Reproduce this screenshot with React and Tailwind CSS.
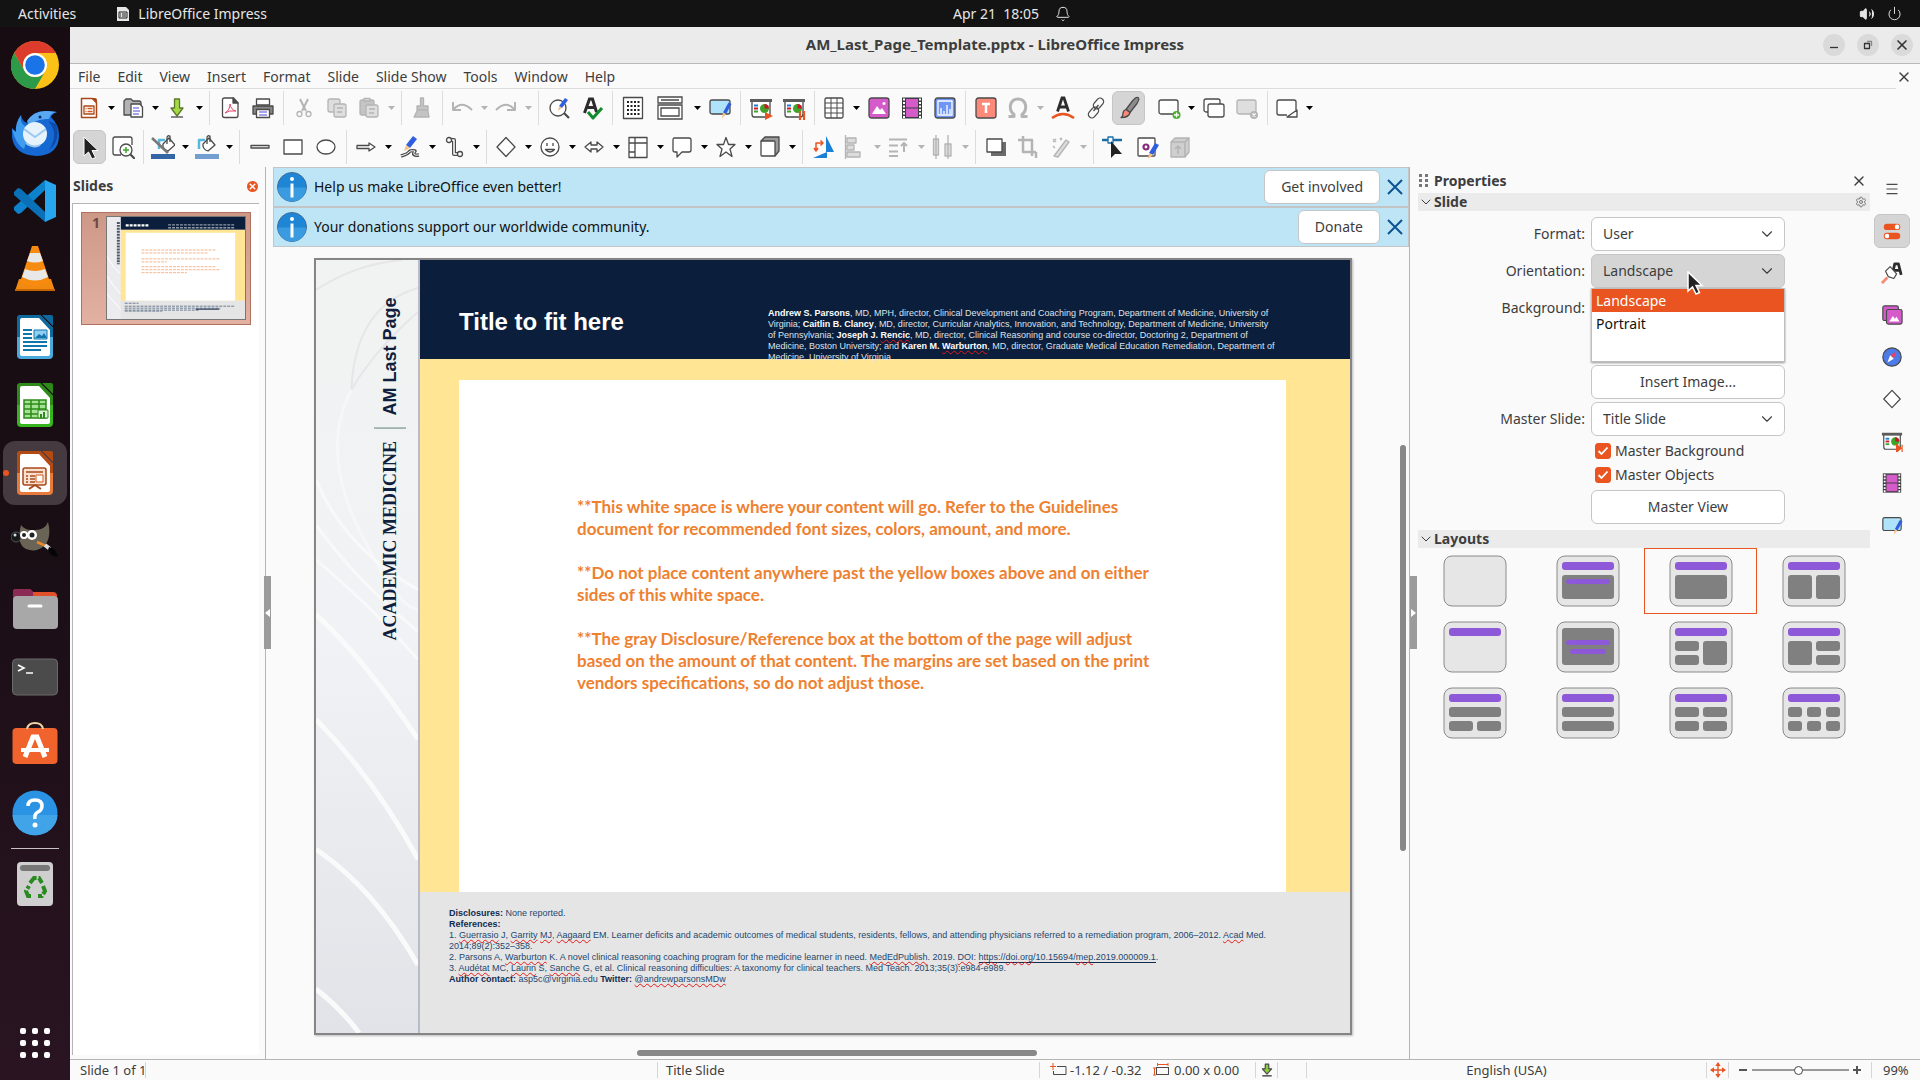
import React, { useState } from 'react';
import { Bell, Volume2, Power, X, ChevronDown, Settings } from 'lucide-react';

const INK = '#4a4a4a';
const OFF = '#b4b4b4';

function Icon({ children, size = 24, box = 24, stroke = INK, className = '' }) {
  return (
    <svg
      width={size}
      height={size}
      viewBox={`0 0 ${box} ${box}`}
      fill="none"
      stroke={stroke}
      strokeWidth="1.3"
      strokeLinejoin="round"
      className={`shrink-0 ${className}`}
      aria-hidden="true"
    >
      {children}
    </svg>
  );
}

/* Shared icon pieces */
const plate = (
  <>
    <path d="M3 5h18v13q0 3-3 3H5q-2 0-2-3z" fill="#fff" />
    <path d="M1 3h22v3H1z" fill="#5c5c5c" stroke="none" />
    <path d="M5 9.500h4" stroke="#1a7fd6" strokeWidth="2" />
    <path d="M5 12.500h4" stroke="#c9162c" strokeWidth="2" />
    <path d="M5 15.500h4" stroke="#3fa52a" strokeWidth="2" />
    <circle cx="15.500" cy="12.500" r="4.500" fill="#3fa52a" stroke="none" />
    <path d="M15.500 12.500V8a4.500 4.500 0 0 1 4.500 4.500z" fill="#c9162c" stroke="none" />
  </>
);

const penBoard = (
  <>
    <rect x="2" y="4" width="20" height="14" rx="2" fill="#aee3f9" />
    <path d="M20.500 6.500l3 1.500-5.500 10-3-1.500z" fill="#2f5fe0" stroke="none" />
    <path d="M15 16.500l3 1.500-4 4.500z" fill="#f9c08a" stroke="none" />
  </>
);

const film = (
  <>
    <rect x="2" y="1.500" width="20" height="21" fill="#3c3c3c" stroke="none" />
    <rect x="6" y="3" width="12" height="8.500" fill="#d55bcb" stroke="none" />
    <rect x="6" y="12.500" width="12" height="8.500" fill="#d55bcb" stroke="none" />
    <path d="M4 2.500v20M20 2.500v20" stroke="#fff" strokeWidth="2" strokeDasharray="2 1.500" />
  </>
);

const cursorPath = 'M1 1v19l4.500-4 3.500 7 3.500-1.500-3.500-7h6z';

const bucket = (
  <>
    <path d="M4 14V5h6" stroke="#58b7dc" strokeWidth="2.500" />
    <path d="M8 9l6-6 6 7-7 6q-6-2-5-7z" fill="#fff" />
    <path d="M12 9V3q0-3 3-2v6" />
  </>
);

const icons = {
  newDoc: (
    <>
      <path d="M4.500 2.500h11l4 4v15h-15z" fill="#fff" stroke="#a8481a" strokeWidth="1.500" />
      <path d="M14 2h4q2 0 2 2v4z" fill="#a8481a" stroke="none" />
      <rect x="7" y="10" width="10" height="8" stroke="#a8481a" />
      <path d="M8.500 12.500h1m1 0h5m-7 3h1m1 0h5" stroke="#d05a1f" />
    </>
  ),
  open: (
    <>
      <path d="M3 19V5l2-2h5l2 2h6q2 0 2 2v12z" fill="#b3b3b3" />
      <path d="M10 8h9l2.500 3v10H10z" fill="#fff" />
      <path d="M12 12h6m-6 3h7m-7 3h6" stroke="#8a84e6" />
    </>
  ),
  save: (
    <>
      <path d="M9.500 3h5v9H18l-6 8-6-8h3.500z" fill="#a5d845" stroke="#5c7a2c" />
      <path d="M6 21h12" />
    </>
  ),
  pdf: (
    <>
      <path d="M4.500 4q0-2 2-2h9l4.500 5v12.500q0 2-2 2h-11.500q-2 0-2-2z" fill="#fff" />
      <path d="M15 2v5h5z" fill={INK} />
      <path d="M12 8q0 6-5 9 4-3 11-2-5-1-6-7z" stroke="#e5446a" strokeWidth="1" />
    </>
  ),
  print: (
    <>
      <rect x="5.500" y="3" width="13" height="6" fill="#fff" />
      <path d="M2 10h20v8H2z" fill="#848484" />
      <rect x="5.500" y="13.500" width="13" height="8" fill="#fff" />
      <path d="M8 16h8m-8 3h8" stroke="#8a84e6" />
    </>
  ),
  cut: (
    <>
      <path d="M8 3l6 12M16 3l-6 12" strokeWidth="2" />
      <circle cx="7.500" cy="18" r="2.500" />
      <circle cx="16.500" cy="18" r="2.500" />
    </>
  ),
  copy: (
    <>
      <rect x="3" y="3" width="12" height="13" rx="2" fill="#dedede" />
      <rect x="9" y="8" width="12" height="13" rx="2" fill="#dedede" />
      <path d="M12 12h6m-6 4h5" />
    </>
  ),
  paste: (
    <>
      <rect x="3" y="4" width="14" height="15" rx="2" fill="#c4c4c4" />
      <path d="M7 5V2.500h6V5z" fill="#dedede" />
      <rect x="9" y="9" width="12" height="12" rx="2" fill="#dedede" />
      <path d="M12 13h6m-6 4h5" />
    </>
  ),
  clone: <path d="M10.500 2h3v8H18v5l1 6H4l3-6v-5h3.500zM7 14h11" fill="#c4c4c4" />,
  undo: <path d="M3 6v8h8M4 13q8-9 18 1" strokeWidth="2" />,
  redo: <path d="M21 6v8h-8M20 13q-8-9-18 1" strokeWidth="2" />,
  find: (
    <>
      <circle cx="11" cy="12" r="8" fill="#fff" />
      <path d="M17 17l5 5" strokeWidth="2.200" />
      <path d="M18 2l3 2-6 8-3-2z" fill="#2f5fe0" stroke="none" />
      <path d="M12 10l3 2-4 3z" fill="#f9c08a" stroke="none" />
    </>
  ),
  spell: (
    <>
      <path d="M4.500 17L9.500 3h3l4 13M6.500 11.500h8" stroke="#2c2c2c" strokeWidth="3" strokeLinejoin="miter" />
      <path d="M8 16l5 6 9-10" stroke="#138a2b" strokeWidth="3" />
    </>
  ),
  grid: (
    <>
      <rect x="2.500" y="1.500" width="19" height="21" fill="#fff" />
      <path d="M6 6h13M6 10h13M6 14h13M6 18h13" stroke="#222" strokeWidth="2" strokeDasharray="2 1.500" />
    </>
  ),
  tableIns: (
    <>
      <rect x="3" y="2" width="18" height="20" rx="1.500" fill="#fff" />
      <path d="M3 7h18M3 12h18M3 17h18M9 2v20M15 2v20" strokeWidth="1" />
    </>
  ),
  startFirst: (
    <>
      {plate}
      <path d="M16 16v8l8-4z" fill="#e95420" stroke="none" />
    </>
  ),
  startCurrent: (
    <>
      {plate}
      <path d="M18 15v9M22 15v9" stroke="#e95420" strokeWidth="2.200" />
    </>
  ),
  image: (
    <>
      <rect x="2" y="2" width="20" height="20" rx="2.500" fill="#d55bcb" />
      <path d="M5 18l5-8 3 4 2-2 4 6z" fill="#fff" stroke="none" />
      <circle cx="17" cy="7.500" r="1.500" fill="#fff" stroke="none" />
    </>
  ),
  film,
  chart: (
    <>
      <rect x="2" y="2" width="20" height="20" rx="2.500" fill="#6f96f5" />
      <path d="M5 5v14h14V5zM8 18v-6m3 6v-3m3 3V9m3 9v-5" stroke="#fff" />
    </>
  ),
  textBox: (
    <>
      <rect x="2" y="2" width="20" height="20" rx="2.500" fill="#fb8a7a" />
      <path d="M8 8h8M12 8v9" stroke="#fff" strokeWidth="2.500" />
    </>
  ),
  omega: <path d="M2.500 20.500H8v-2Q3.500 15 4.500 9 6 3 12 3t7.500 6q1 6-3.500 9.500v2h5.500" strokeWidth="3" />,
  fontwork: (
    <>
      <path d="M6.500 15.500L11 2h2l4.500 13.500M8 11h8" stroke="#2c2c2c" strokeWidth="2.800" strokeLinejoin="miter" />
      <path d="M1 22q11-8 22 0" stroke="#e95420" strokeWidth="2.500" />
    </>
  ),
  link: (
    <>
      <rect x="11" y="1.500" width="7" height="12" rx="3.500" transform="rotate(40 14.500 7.500)" />
      <rect x="6" y="10.500" width="7" height="12" rx="3.500" transform="rotate(40 9.500 16.500)" />
      <path d="M9.500 15l5-6" />
    </>
  ),
  brush: (
    <>
      <path d="M21 1.500q2 1-1 6l-7 9-4-3 6-8q4-5 6-4z" fill="#8c8c8c" />
      <path d="M9 13.500l4 3q-1 5-9 5 2-1 2-4t3-4z" fill="#f98a78" />
    </>
  ),
  newSlide: (
    <>
      <rect x="2" y="4" width="19" height="14" rx="2" fill="#fff" />
      <circle cx="19.500" cy="19" r="4" fill="#4caf2c" stroke="none" />
      <path d="M17 19h5m-2.500-2.500v5" stroke="#fff" />
    </>
  ),
  dupSlide: (
    <>
      <rect x="2" y="3" width="16" height="13" rx="2" fill="#fff" />
      <rect x="6" y="8" width="16" height="13" rx="2" fill="#fff" />
    </>
  ),
  delSlide: (
    <>
      <rect x="2" y="4" width="19" height="14" rx="2" fill="#dedede" />
      <circle cx="19" cy="19" r="4" fill="#b4b4b4" stroke="none" />
      <path d="M17.500 17.500l3 3m0-3l-3 3" stroke="#fff" />
    </>
  ),
  slideLayout: (
    <>
      <path d="M21 14V6q0-2-2-2H4Q2 4 2 6v11q0 2 2 2h8" fill="#fff" />
      <path d="M12 21l10-7v7z" fill="#fff" />
    </>
  ),
  penBoard,
  cursor: <path d={cursorPath} transform="translate(5 1)" fill="#222" stroke="#fff" strokeWidth="1" />,
  zoomPan: (
    <>
      <path d="M10 20H4q-2 0-2-2V4q0-2 2-2h15q2 0 2 2v6" fill="#fff" />
      <circle cx="15" cy="15" r="6" fill="#fff" />
      <path d="M19.500 19.500L24 24" strokeWidth="2.200" />
      <path d="M12 15h6m-3-3v6" stroke="#3fa52a" strokeWidth="1.500" />
    </>
  ),
  lineColor: (
    <>
      <g transform="translate(4 0)">{bucket}</g>
      <path d="M1 3l16 15" strokeWidth="2.500" stroke="#777" />
      <path d="M0 19h24v5H0z" fill="#3465a4" stroke="none" />
    </>
  ),
  fillColor: (
    <>
      {bucket}
      <path d="M0 19h24v5H0z" fill="#729fcf" stroke="none" />
    </>
  ),
  line: <rect x="3" y="10.500" width="18" height="2.500" fill="#fff" />,
  rect: <rect x="3" y="5" width="18" height="14" fill="#fff" />,
  ellipse: <ellipse cx="12" cy="12" rx="9" ry="7" fill="#fff" />,
  arrowLine: <path d="M3 10.500h12V8l6 4-6 4v-2.500H3z" fill="#fff" />,
  curve: (
    <>
      <path d="M15 1l4 3-7 9-4-3z" fill="#2f5fe0" stroke="none" />
      <path d="M8 10l4 3-6 3z" fill="#f9c08a" stroke="none" />
      <path d="M3 21q7-2 8-4t6-1q-4 5 4 4" strokeWidth="3.500" />
      <path d="M3 21q7-2 8-4t6-1q-4 5 4 4" stroke="#fff" strokeWidth="1" />
    </>
  ),
  connector: (
    <>
      <path d="M7 5h5v14h4" strokeWidth="4" />
      <path d="M7 5h5v14h4" stroke="#fff" strokeWidth="1.500" />
      <circle cx="7" cy="5" r="2.500" fill="#fff" />
      <circle cx="18" cy="19" r="2.500" fill="#fff" />
    </>
  ),
  diamond: <path d="M12 2.500l9 9.500-9 9.500L3 12z" fill="#fff" />,
  smiley: (
    <>
      <circle cx="12" cy="12" r="9" fill="#fff" />
      <path d="M9 8v3m6-3v3M7.500 14.500q4.500 5 9 0z" />
    </>
  ),
  doubleArrow: <path d="M3 12l6-5v3h6V7l6 5-6 5v-3H9v3z" fill="#fff" />,
  flow: (
    <>
      <rect x="3" y="2.500" width="18" height="20" fill="#fff" />
      <path d="M9 2.500v20M3 8h18M3 17h6" />
    </>
  ),
  callout: <path d="M4 3h15q2 0 2 2v10q0 2-2 2h-7l-5 5v-5H5q-2 0-2-2V5q0-2 1-2z" fill="#fff" />,
  star: <path d="M12 2.500l2.500 7H21l-5 4.500 2 7.500-6-4.500-6 4.500L8 14 3 9.500h6.500z" fill="#fff" />,
  cube: (
    <>
      <path d="M3 6l4-4h14v14l-4 5z" fill="#9b9b9b" />
      <rect x="3" y="6" width="14" height="15" rx="1" fill="#fff" />
    </>
  ),
  rotate: (
    <>
      <path d="M15 1v16h8z" fill="#1a7fd6" stroke="none" />
      <path d="M2 23h14v-6z" fill="#1a7fd6" stroke="none" />
      <path d="M5 15V8h6M3 13l2 3 2-3M9.500 5.500L12 8l-2.500 2.500" stroke="#e95420" strokeWidth="1.500" />
    </>
  ),
  align: <path d="M2.500 0v24M4 3h9v5H4zM4 10h7v5H4zM4 17h13v5H4z" fill="#dcdcdc" />,
  arrange: <path d="M2 4.500h18M2 10.500h9M2 16.500h9M2 21h9M17 17V8m-3 3l3-3 3 3" strokeWidth="2" />,
  distribute: <path d="M5 0v24M17 0v24M2.500 4h5v16h-5zM14 9h6v12h-6z" fill="#dcdcdc" />,
  shadow: (
    <>
      <rect x="7" y="7" width="15" height="14" fill="#6b6b6b" stroke="none" />
      <rect x="3" y="4" width="15" height="13" fill="#fff" />
    </>
  ),
  crop: <path d="M6 1v16h13M1 5h14v16M19 17v6" strokeWidth="2.500" />,
  wand: (
    <>
      <path d="M5 21L17 5l3 2L9 22z" fill="#dcdcdc" />
      <path d="M4 4l3 3m0-3L4 7m7-4l2 2m0-2l-2 2M4 11l2 2" />
    </>
  ),
  points: (
    <>
      <path d="M0 5h20" stroke="#1a6da8" strokeWidth="2.500" />
      <rect x="6" y="2" width="5" height="6" fill="#fff" stroke="#1a6da8" />
      <path d="M9 6v17l4-4h7z" fill="#222" stroke="none" />
    </>
  ),
  glue: (
    <>
      <rect x="3" y="3" width="17" height="18" rx="1" fill="#fff" />
      <circle cx="11" cy="12" r="2.500" stroke="#8a2a7d" strokeWidth="2.200" />
      <path d="M20 8l4 2-6 10-4-2z" fill="#2f5fe0" stroke="none" />
      <path d="M14 18l4 2-5 4z" fill="#f9c08a" stroke="none" />
    </>
  ),
  extrude: (
    <>
      <path d="M3 7l4-4h14v14l-4 5H3z" fill="#cfcfcf" />
      <path d="M3 7h14v15M17 7l4-4M10 19v-8m-3 3l3-3 3 3" strokeWidth="1.500" />
    </>
  ),
  styles: (
    <>
      <path d="M12 15l3-13h4l3 12M15 9h6" stroke="#2c2c2c" strokeWidth="3" />
      <path d="M5 10l5-5 7 8-3 5-6-2z" fill="#fff" />
      <path d="M1 23l6-6" stroke="#f98a78" strokeWidth="3" />
    </>
  ),
  gallery: (
    <>
      <rect x="2" y="2" width="17" height="16" rx="2" fill="#d55bcb" />
      <rect x="6" y="6" width="17" height="16" rx="2" fill="#d55bcb" />
      <path d="M9 19l4-6 2 3 2-2 3 5z" fill="#fff" stroke="none" />
    </>
  ),
  navigator: (
    <>
      <circle cx="12" cy="12" r="10" fill="#4a7be8" />
      <path d="M17 6l-3 8-4-4z" fill="#e5446a" stroke="none" />
      <path d="M7 18l3-8 4 4z" fill="#fff" stroke="none" />
    </>
  ),
  transition: (
    <>
      {plate}
      <path d="M17 16v8l5-4zM23 16v8" fill="#e95420" stroke="#e95420" />
    </>
  ),
  properties: (
    <>
      <rect x="3" y="4" width="18" height="7" rx="3.500" fill="#e95420" stroke="none" />
      <circle cx="17.500" cy="7.500" r="2.500" fill="#fff" stroke="none" />
      <rect x="3" y="14" width="18" height="7" rx="3.500" fill="#e95420" stroke="none" />
      <circle cx="6.500" cy="17.500" r="2.500" fill="#fff" stroke="none" />
    </>
  ),
  menu: <path d="M6 7h12M6 12h12M6 17h12" />
};

const sep = { type: 'sep' };
const toolbarRows = [
  [
    { id: 'newDoc', label: 'New', drop: true },
    { id: 'open', label: 'Open', drop: true },
    { id: 'save', label: 'Save', drop: true },
    sep,
    { id: 'pdf', label: 'Export as PDF' },
    { id: 'print', label: 'Print' },
    sep,
    { id: 'cut', label: 'Cut', off: true },
    { id: 'copy', label: 'Copy', off: true },
    { id: 'paste', label: 'Paste', off: true, drop: true },
    sep,
    { id: 'clone', label: 'Clone Formatting', off: true },
    sep,
    { id: 'undo', label: 'Undo', off: true, drop: true },
    { id: 'redo', label: 'Redo', off: true, drop: true },
    sep,
    { id: 'find', label: 'Find and Replace' },
    { id: 'spell', label: 'Spelling' },
    sep,
    { id: 'grid', label: 'Display Grid' },
    { id: 'views', label: 'Display Views', drop: true, wide: true },
    { id: 'penBoard', label: 'Master Slide' },
    sep,
    { id: 'startFirst', label: 'Start from First Slide' },
    { id: 'startCurrent', label: 'Start from Current Slide' },
    sep,
    { id: 'tableIns', label: 'Table', drop: true },
    { id: 'image', label: 'Insert Image' },
    { id: 'film', label: 'Insert Audio or Video' },
    { id: 'chart', label: 'Insert Chart' },
    sep,
    { id: 'textBox', label: 'Insert Text Box' },
    { id: 'omega', label: 'Special Character', off: true, drop: true },
    { id: 'fontwork', label: 'Insert Fontwork' },
    { id: 'link', label: 'Insert Hyperlink' },
    { id: 'brush', label: 'Show Draw Functions', active: true },
    { type: 'gap' },
    { id: 'newSlide', label: 'New Slide', drop: true },
    { id: 'dupSlide', label: 'Duplicate Slide' },
    { id: 'delSlide', label: 'Delete Slide', off: true },
    sep,
    { id: 'slideLayout', label: 'Slide Layout', drop: true }
  ],
  [
    { id: 'cursor', label: 'Select', active: true },
    { id: 'zoomPan', label: 'Zoom and Pan' },
    sep,
    { id: 'lineColor', label: 'Line Color', drop: true },
    { id: 'fillColor', label: 'Fill Color', drop: true },
    sep,
    { id: 'line', label: 'Insert Line' },
    { id: 'rect', label: 'Rectangle' },
    { id: 'ellipse', label: 'Ellipse' },
    sep,
    { id: 'arrowLine', label: 'Lines and Arrows', drop: true },
    { id: 'curve', label: 'Curves and Polygons', drop: true },
    { id: 'connector', label: 'Connectors', drop: true },
    sep,
    { id: 'diamond', label: 'Basic Shapes', drop: true },
    { id: 'smiley', label: 'Symbol Shapes', drop: true },
    { id: 'doubleArrow', label: 'Block Arrows', drop: true },
    { id: 'flow', label: 'Flowchart', drop: true },
    { id: 'callout', label: 'Callouts', drop: true },
    { id: 'star', label: 'Stars and Banners', drop: true },
    { id: 'cube', label: '3D Objects', drop: true },
    sep,
    { id: 'rotate', label: 'Rotate' },
    { id: 'align', label: 'Align Objects', off: true, drop: true },
    { id: 'arrange', label: 'Arrange', off: true, drop: true },
    { id: 'distribute', label: 'Distribute', off: true, drop: true },
    sep,
    { id: 'shadow', label: 'Shadow' },
    { id: 'crop', label: 'Crop Image', off: true },
    { id: 'wand', label: 'Filter', off: true, drop: true },
    sep,
    { id: 'points', label: 'Toggle Point Edit Mode' },
    { id: 'glue', label: 'Show Gluepoint Functions' },
    { id: 'extrude', label: 'Toggle Extrusion', off: true }
  ]
];

function Caret({ off }) {
  return (
    <svg width="7" height="4" viewBox="0 0 7 4" className="shrink-0" aria-hidden="true">
      <path d="M0 0h7L3.500 4z" fill={off ? OFF : '#000'} />
    </svg>
  );
}

function ToolItem({ item }) {
  if (item.type === 'sep') {
    return (
      <div className="flex w-2 shrink-0 justify-center">
        <div className="h-full w-px bg-[#dcdcdc]" />
      </div>
    );
  }
  if (item.type === 'gap') return <div className="w-2 shrink-0" />;

  return (
    <button
      type="button"
      aria-label={item.label}
      className={`flex h-[34px] shrink-0 items-center rounded-md ${item.drop ? (item.wide ? 'w-[54px]' : 'w-11') : 'w-[33px]'} ${
        item.active ? 'border border-[#c6c6c6] bg-[#d5d5d5]' : ''
      }`}
    >
      <span className="flex flex-1 items-center justify-center">
        {item.wide ? (
          <svg width="26" height="24" viewBox="0 0 26 24" fill="#fff" stroke={INK} strokeWidth="1.300" aria-hidden="true">
            <path d="M1 1h24v6H1zM1 9h24v14H1z" />
            <path d="M4 4h18M4 12h18v8H4z" />
          </svg>
        ) : (
          <Icon stroke={item.off ? OFF : INK}>{icons[item.id]}</Icon>
        )}
      </span>
      {item.drop && (
        <span className="flex w-3 justify-center">
          <Caret off={item.off} />
        </span>
      )}
    </button>
  );
}

function OfficeIcon({ dark, light, children }) {
  return (
    <svg width="48" height="48" viewBox="0 0 48 48" aria-hidden="true">
      <path d="M10 2h19l13 13v27q0 4-4 4H10q-4 0-4-4V6q0-4 4-4z" fill={light} />
      <path d="M6 24V6q0-4 4-4h19l13 13v9z" fill={dark} />
      <path d="M11 5h17l11 12v24q0 2-2 2H11q-2 0-2-2V7q0-2 2-2z" fill="#fff" />
      <path d="M31 2h9q2 0 2 2v9z" fill={dark} />
      {children}
    </svg>
  );
}

const dockItems = [
  {
    label: 'Google Chrome',
    art: (
      <svg width="48" height="48" viewBox="0 0 48 48" aria-hidden="true">
        <circle cx="24" cy="24" r="24" fill="#fbc116" />
        <path d="M3.200 12A24 24 0 0 1 44.800 12H24a12 12 0 0 0-10.400 18z" fill="#dd3b2c" />
        <path d="M3.200 12l10.400 18A12 12 0 0 0 34.400 30L24 48A24 24 0 0 1 3.200 12z" fill="#2c9a48" />
        <circle cx="24" cy="24" r="12" fill="#fff" />
        <circle cx="24" cy="24" r="9.800" fill="#1a73e8" />
      </svg>
    )
  },
  {
    label: 'Thunderbird',
    art: (
      <svg width="48" height="48" viewBox="0 0 48 48" aria-hidden="true">
        <path d="M1 19l4 4q0-9 5-17 1 6 6 8Q21 1 37 2l9 1q-5 2-6 5 8 8 8 18 0 20-22 21Q3 46 1 28z" fill="#1668d2" />
        <path d="M1 20q4 16 12 20l7-22Q8 18 10 6 4 14 5 23z" fill="#3f9df0" />
        <path d="M16 12Q23 1 37 2l9 1q-7 1-8 7-10-1-20 6z" fill="#59a8f3" />
        <path d="M37 12q12 12 1 29Q50 32 45 15z" fill="#0c4ba8" />
        <circle cx="24" cy="25" r="12" fill="#e6f3fd" />
        <path d="M13 20l11 8 11-8M15 34q8 6 14 2" stroke="#9cc7ee" strokeWidth="2" fill="none" />
        <circle cx="29" cy="8" r="1.500" fill="#0b2a63" />
      </svg>
    )
  },
  {
    label: 'Visual Studio Code',
    art: (
      <svg width="48" height="48" viewBox="0 0 48 48" aria-hidden="true">
        <path d="M34 3v10L10 36l-3 1-4-4v-3z" fill="#0e83cd" />
        <path d="M34 45V35L10 12l-3-1-4 4v3z" fill="#0a70b7" />
        <path d="M34 3l11 5v32l-11 5z" fill="#27a5ef" />
      </svg>
    )
  },
  {
    label: 'VLC media player',
    art: (
      <svg width="48" height="48" viewBox="0 0 48 48" aria-hidden="true">
        <path d="M8 34h32l4 12H4z" fill="#f28a11" />
        <path d="M4 44h40v2H4z" fill="#c66505" />
        <path d="M21 1h6l12 36q-15 8-30 0z" fill="#f68b10" />
        <path d="M19 8h10l3 8q-8 3-16 0zM14 24q10 4 20 0l3 8q-13 7-26 0z" fill="#e8e8e8" />
      </svg>
    )
  },
  {
    label: 'LibreOffice Writer',
    art: (
      <OfficeIcon dark="#0e6a9e" light="#4ba9dc">
        <path d="M12 17h9M12 21h9M12 25h9M12 29h24M12 33h24M12 37h18" stroke="#1275ac" strokeWidth="1.800" />
        <path d="M23 17h13v9H23z" fill="#8fd0f2" stroke="#1275ac" />
        <path d="M24 25l4-4 3 2 2-3 3 5z" fill="#1275ac" />
      </OfficeIcon>
    )
  },
  {
    label: 'LibreOffice Calc',
    art: (
      <OfficeIcon dark="#2d8a18" light="#36b51e">
        <path d="M13 19h22v18H13z" fill="#a5e394" stroke="#2d8a18" strokeWidth="1.500" />
        <path d="M13 23h22M13 28h22M13 33h22M20 19v18M28 19v18" stroke="#2d8a18" strokeWidth="1.500" />
        <path d="M27 29h10v8H27z" fill="#d9f4d2" stroke="#2d8a18" />
        <path d="M30 37v-4m3 4v-6" stroke="#2d8a18" strokeWidth="2" />
      </OfficeIcon>
    )
  },
  {
    label: 'LibreOffice Impress',
    active: true,
    art: (
      <OfficeIcon dark="#b34a12" light="#e87a3c">
        <rect x="12" y="19" width="23" height="17" rx="2" fill="#fbe0cf" stroke="#a8481a" strokeWidth="1.500" />
        <path d="M15 23h17M15 27h2m2 0h5m-9 3h2m2 0h5m-9 3h2m2 0h5" stroke="#a8481a" strokeWidth="1.500" />
        <path d="M25 26h7v7h-7z" fill="#fff" stroke="#d05a1f" />
        <path d="M24 36l-6 4m6-4l6 4" stroke="#a8481a" strokeWidth="2" />
      </OfficeIcon>
    )
  },
  {
    label: 'GIMP',
    art: (
      <svg width="48" height="48" viewBox="0 0 48 48" aria-hidden="true">
        <path d="M10 8q4 6 14 5 10 0 13-8 4 16-4 24-8 7-18 3Q5 27 10 8z" fill="#6a6456" />
        <ellipse cx="5" cy="20" rx="5" ry="5" fill="#16181a" stroke="#555" />
        <circle cx="4" cy="18" r="1.500" fill="#cfe0e8" />
        <circle cx="13" cy="18" r="4" fill="#fff" />
        <circle cx="21" cy="18" r="5" fill="#fff" />
        <circle cx="13" cy="18" r="2" fill="#222" />
        <circle cx="21" cy="18" r="2.500" fill="#222" />
        <path d="M26 25l9 4" stroke="#e8892c" strokeWidth="2.500" />
        <path d="M34 28l5 4" stroke="#ddd" strokeWidth="4" />
        <path d="M38 30q7 1 9 10-8-1-10-7z" fill="#050505" />
      </svg>
    )
  },
  {
    label: 'Files',
    art: (
      <svg width="48" height="48" viewBox="0 0 48 48" aria-hidden="true">
        <path d="M2 14V7q0-3 3-3h14l3 3h20q4 0 4 4v5z" fill="#e2512a" />
        <path d="M2 14V7q0-3 3-3h14l3 3v8z" fill="#8a2a55" />
        <rect x="2" y="11" width="45" height="33" rx="4" fill="#a8a8a8" />
        <path d="M18 21h12" stroke="#fff" strokeWidth="3" strokeLinecap="round" />
      </svg>
    )
  },
  {
    label: 'Terminal',
    art: (
      <svg width="48" height="48" viewBox="0 0 48 48" aria-hidden="true">
        <rect x="1.500" y="6" width="45" height="36" rx="4" fill="#4b4b4b" stroke="#6a6a6a" />
        <path d="M7 12l6 3-6 3M15 20h7" stroke="#fff" strokeWidth="1.600" fill="none" />
      </svg>
    )
  },
  {
    label: 'Ubuntu Software',
    art: (
      <svg width="48" height="48" viewBox="0 0 48 48" aria-hidden="true">
        <rect x="1.500" y="7" width="45" height="36" rx="4" fill="#f0632c" />
        <path d="M16 8q1-6 8-6t8 6" stroke="#f3d3a5" strokeWidth="2" fill="none" />
        <path d="M14 36l8-20h4l8 20" stroke="#fff" strokeWidth="5" fill="none" />
        <path d="M10 29h28" stroke="#fff" strokeWidth="4" />
      </svg>
    )
  },
  {
    label: 'Help',
    art: (
      <svg width="48" height="48" viewBox="0 0 48 48" aria-hidden="true">
        <circle cx="24" cy="24" r="22.500" fill="#2a93e4" />
        <path d="M1.500 26a22.500 20 0 0 0 45 0z" fill="#42a4e8" />
        <path d="M17 17q0-6 7-6t7 6q0 4-4 6t-3 7" stroke="#fff" strokeWidth="3.500" fill="none" />
        <circle cx="24" cy="36" r="2.500" fill="#fff" />
      </svg>
    )
  }
];

function Dock() {
  return (
    <aside className="flex w-[70px] shrink-0 flex-col items-center bg-gradient-to-b from-[#170c12] via-[#1a0e15] to-[#2a1422] pt-[6px] pb-4">
      <nav className="flex flex-col items-center gap-1">
        {dockItems.map((item) => (
          <button
            key={item.label}
            type="button"
            aria-label={item.label}
            className={`relative flex h-16 w-16 items-center justify-center rounded-xl ${item.active ? 'bg-[#443a40]' : ''}`}
          >
            {item.active && <span className="absolute left-0 h-[6px] w-[6px] rounded-full bg-[#e95420]" />}
            {item.art}
          </button>
        ))}
        <div className="-my-px h-px w-12 bg-[#c8c4c6]" />
        <button type="button" aria-label="Trash" className="flex h-16 w-16 items-center justify-center">
          <svg width="48" height="48" viewBox="0 0 48 48" aria-hidden="true">
            <rect x="6" y="2" width="36" height="44" rx="4" fill="#cfcfcf" />
            <rect x="9" y="5" width="30" height="6" rx="3" fill="#777" />
            <path
              d="M19 23l4-5h5l3 5M32 26l2 5-3 5h-4M20 36h-3l-2-5 3-5"
              stroke="#2a8a22"
              strokeWidth="4"
              fill="none"
              strokeDasharray="9 2"
            />
          </svg>
        </button>
      </nav>
      <button type="button" aria-label="Show Applications" className="mt-auto mb-[6px] grid grid-cols-3 gap-[6px]">
        {[...Array(9)].map((_, i) => (
          <span key={i} className="h-[6px] w-[6px] rounded-[2px] bg-white" />
        ))}
      </button>
    </aside>
  );
}

function TopBar() {
  return (
    <header className="grid h-[27px] shrink-0 grid-cols-[1fr_auto_1fr] items-center bg-[#131313] text-sm text-[#e6e6e6]">
      <div className="flex items-center pl-[18px]">
        <button type="button">Activities</button>
        <button type="button" className="ml-10 flex items-center gap-2">
          <svg width="14" height="16" viewBox="0 0 14 16" aria-hidden="true">
            <path d="M1 1h9l3 3v11H1z" fill="#e6e6e6" />
            <path d="M3 6h8v6H3zM4 8h1m1 0h4M4 10h1m1 0h4" stroke="#222" fill="none" />
          </svg>
          LibreOffice Impress
        </button>
      </div>
      <button type="button" className="flex items-center gap-4 pl-[104px]">
        <span className="whitespace-pre">Apr 21  18:05</span>
        <Bell size={16} strokeWidth={1.5} />
      </button>
      <div className="flex items-center justify-end gap-3 pr-[18px]">
        <Volume2 size={16} fill="#e6e6e6" strokeWidth={1.5} />
        <Power size={15} strokeWidth={1.5} />
      </div>
    </header>
  );
}

function TitleBar() {
  const round = 'flex h-[22px] w-[22px] items-center justify-center rounded-full bg-[#dadada]';
  return (
    <div className="relative flex h-[37px] shrink-0 items-center justify-center border-b border-[#b9b9b9] bg-[#ebebeb]">
      <h1 className="text-[15px] font-bold text-[#3d3d3d]">AM_Last_Page_Template.pptx - LibreOffice Impress</h1>
      <div className="absolute right-[7px] flex gap-3">
        <button type="button" aria-label="Minimize" className={round}>
          <Icon size={10} box={10} stroke="#333"><path d="M1 7.500h8" /></Icon>
        </button>
        <button type="button" aria-label="Restore" className={round}>
          <Icon size={10} box={10} stroke="#333"><path d="M1.500 3.500h5v5h-5z" /><path d="M4 1.500h4.500V6" stroke="#888" /></Icon>
        </button>
        <button type="button" aria-label="Close" className={round}>
          <X size={16} strokeWidth={2.5} color="#333" />
        </button>
      </div>
    </div>
  );
}

const menus = ['File', 'Edit', 'View', 'Insert', 'Format', 'Slide', 'Slide Show', 'Tools', 'Window', 'Help'];

function MenuBar() {
  return (
    <div className="flex h-[25px] shrink-0 items-center justify-between pr-2">
      <nav className="flex h-full flex-1 items-center gap-[17px] border-b border-[#dcdcdc] pt-[2px] pl-2">
        {menus.map((menu) => (
          <button key={menu} type="button">{menu}</button>
        ))}
      </nav>
      <button type="button" aria-label="Close Document">
        <X size={16} strokeWidth={2} />
      </button>
    </div>
  );
}

/* Miniature of the slide for the slide sorter */
function Thumbnail() {
  return (
    <svg viewBox="0 0 140 103" preserveAspectRatio="none" className="w-full border border-[#777]" aria-hidden="true">
      <rect width="140" height="105" fill="#ececef" />
      <path d="M0 40q6 12 14 18M0 60q6 10 14 18M0 78l14 16" stroke="#fff" fill="none" />
      <rect x="14" width="126" height="13" fill="#0b1e3c" />
      <rect x="14" y="13" width="126" height="72" fill="#ffe594" />
      <rect x="19" y="16" width="111" height="69" fill="#fff" />
      <rect x="14" y="85" width="126" height="20" fill="#e5e5e5" />
      <path d="M11.500 5v43" stroke="#4a566b" strokeWidth="3" strokeDasharray="2 1" />
      <path d="M19 8.500h23" stroke="#fff" strokeWidth="2.500" strokeDasharray="3 1" />
      <path d="M62 8h68M62 11h68" stroke="#8f99a8" strokeWidth="1.500" strokeDasharray="3 1" />
      <path
        d="M35 33.500h75M35 36.500h68M35 42.500h79M35 45.500h26M35 50.500h76M35 53.500h79M35 56.500h46"
        stroke="#f5b48c"
        strokeDasharray="3 1"
      />
      <path d="M18 87.500h14M18 90.500h112M18 92.500h97M18 94.500h76M18 95.500h38" stroke="#6c7d94" strokeDasharray="3 1" />
      <path d="M90 93.500h24" stroke="#0b1e3c" />
    </svg>
  );
}

function SlidesPanel() {
  return (
    <section className="flex w-[196px] shrink-0 flex-col border-r border-[#b5b5b5]">
      <div className="flex h-9 shrink-0 items-center justify-between pt-[2px] pr-[7px] pl-[3px]">
        <h2 className="font-bold">Slides</h2>
        <button type="button" aria-label="Close Slides" className="flex h-[11px] w-[11px] items-center justify-center rounded-full bg-[#e95420]">
          <X size={9} strokeWidth={4} color="#fff" />
        </button>
      </div>
      <div className="mr-[6px] mb-1 ml-[2px] flex-1 border-t border-l border-[#b5b5b5] bg-white">
        <button
          type="button"
          className="mt-2 ml-2 flex w-[170px] items-start border border-[#b07260] bg-gradient-to-b from-[#ce9887] to-[#e2b1a2] pt-[3px] pr-1 pb-1"
        >
          <span className="w-6 shrink-0 pr-[6px] text-right leading-[14px] font-bold text-[#6b4a42]">1</span>
          <Thumbnail />
        </button>
      </div>
    </section>
  );
}

function SplitHandle({ dir }) {
  return (
    <button
      type="button"
      aria-label={dir === 'left' ? 'Hide slide panel' : 'Hide sidebar'}
      className={`absolute top-[409px] z-10 flex h-[73px] w-[7px] items-center justify-center bg-[#9b9b9b] ${
        dir === 'left' ? 'left-[-2px]' : 'left-0'
      }`}
    >
      <svg width="5" height="8" viewBox="0 0 5 8" aria-hidden="true">
        <path d={dir === 'left' ? 'M5 0v8L0 4z' : 'M0 0v8l5-4z'} fill="#fff" />
      </svg>
    </button>
  );
}

function InfoBar({ text, action }) {
  return (
    <div className="flex h-10 items-center border border-[#c4c4c4] bg-[#bde5f6] pr-[5px] pl-[3px] text-[#111]">
      <svg width="30" height="30" viewBox="0 0 30 30" aria-hidden="true">
        <circle cx="15" cy="15" r="14.500" fill="#1f86d6" stroke="#3f6d94" />
        <path d="M1 15.500a14 14 0 0 0 28 0z" fill="#3b9be0" />
        <path d="M15 11.500v14" stroke="#fff" strokeWidth="3" />
        <circle cx="15" cy="7" r="2" fill="#fff" />
      </svg>
      <p className="ml-[7px] flex-1">{text}</p>
      <button type="button" className="h-[34px] rounded-md border border-[#c6c6c6] bg-white px-4 text-[#3d3d3d]">
        {action}
      </button>
      <button type="button" aria-label="Close Infobar" className="ml-[7px]">
        <Icon size={16} box={16} stroke="#0c5293"><path d="M1 1l14 14M15 1L1 15" strokeWidth="2" /></Icon>
      </button>
    </div>
  );
}

function Misspelt({ children }) {
  return (
    <span className="underline decoration-[#e21b1b] decoration-wavy decoration-1 underline-offset-1 [text-decoration-skip-ink:none]">
      {children}
    </span>
  );
}

function SlideCanvas() {
  return (
    <article className="flex flex-1 border-2 border-[#858585] bg-white font-['Liberation_Sans',Arial,sans-serif] leading-[11px] shadow-[1px_1px_2px_#bbb]">
      <div className="relative w-[104px] shrink-0 overflow-hidden border-r-2 border-[#b9bcc6] bg-gradient-to-b from-[#f1f3f2] via-[#f1f2f5] to-[#e2e3e8]">
        <svg viewBox="0 0 104 774" preserveAspectRatio="none" className="absolute inset-0 h-full w-full" fill="none" aria-hidden="true">
          <path d="M0 30Q40 4 88 0M104 28Q40 46 36 130M104 52Q60 90 36 130" stroke="#e6e5e7" strokeWidth="2" />
          <path d="M36 130Q4 190 44 270T104 350" stroke="#f6f7f8" strokeWidth="3" />
          <path d="M0 220Q30 290 104 330M0 265Q40 320 104 372M0 300Q60 350 104 400" stroke="#f9f9fa" strokeWidth="3" />
          <path d="M0 355Q50 400 104 480M0 460Q60 520 104 600M0 590Q60 630 104 706M0 730Q26 750 44 774" stroke="#fafafb" strokeWidth="5" />
        </svg>
        <div className="absolute top-[38px] right-3 flex rotate-180 items-center gap-3 whitespace-nowrap text-[#0f1f3d] [writing-mode:vertical-rl]">
          <span className="font-['Liberation_Serif',serif] text-lg leading-7 font-bold">ACADEMIC MEDICINE</span>
          <span className="h-px w-8 bg-[#5d7f78]" />
          <span className="text-lg leading-7 font-bold">AM Last Page</span>
        </div>
      </div>

      <div className="flex min-w-0 flex-1 flex-col">
        <div className="relative z-10 flex h-[99px] shrink-0 items-start bg-[#0b1e3c] pt-12 pr-16 pl-[39px] text-white">
          <h2 className="w-[309px] shrink-0 text-2xl leading-7 font-bold">Title to fit here</h2>
          <p className="flex-1 text-[9px] whitespace-nowrap text-[#dfe3ea] [&_b]:text-white">
            <b>Andrew S. Parsons</b>, MD, MPH, director, Clinical Development and Coaching Program, Department of Medicine, University of
            <br />
            Virginia; <b>Caitlin B. Clancy</b>, MD, director, Curricular Analytics, Innovation, and Technology, Department of Medicine, University
            <br />
            of Pennsylvania; <b>Joseph J. <Misspelt>Rencic</Misspelt></b>, MD, director, Clinical Reasoning and course co-director, Doctoring 2, Department of
            <br />
            Medicine, Boston University; and <b>Karen M. <Misspelt>Warburton</Misspelt></b>, MD, director, Graduate Medical Education Remediation, Department of
            <br />
            Medicine, University of Virginia
          </p>
        </div>

        <div className="flex-1 bg-[#ffe594] pt-[21px] pr-16 pl-[39px]">
          <div className="flex h-full flex-col gap-[22px] bg-white pt-[116px] pl-[118px] font-['Lato',sans-serif] text-[17px] leading-[22px] font-bold whitespace-nowrap text-[#ee8130]">
            <p>
              **This white space is where your content will go. Refer to the Guidelines
              <br />
              document for recommended font sizes, colors, amount, and more.
            </p>
            <p>
              **Do not place content anywhere past the yellow boxes above and on either
              <br />
              sides of this white space.
            </p>
            <p>
              **The gray Disclosure/Reference box at the bottom of the page will adjust
              <br />
              based on the amount of that content. The margins are set based on the print
              <br />
              vendors specifications, so do not adjust those.
            </p>
          </div>
        </div>

        <div className="h-[141px] shrink-0 bg-[#e5e5e5] pt-4 pl-[29px] text-[9px] whitespace-nowrap text-[#24476e] [&_b]:text-[#0f2c52]">
          <p><b>Disclosures:</b> None reported.</p>
          <p><b>References:</b></p>
          <p>
            1. <Misspelt>Guerrasio</Misspelt> J, <Misspelt>Garrity</Misspelt> <Misspelt>MJ</Misspelt>, <Misspelt>Aagaard</Misspelt> EM. Learner deficits and academic outcomes of medical students, residents, fellows, and attending physicians referred to a remediation program, 2006–2012. <Misspelt>Acad</Misspelt> Med.
            <br />
            2014;89(2):352–358.
          </p>
          <p>
            2. Parsons A, <Misspelt>Warburton</Misspelt> K. A novel clinical reasoning coaching program for the medicine learner in need. <Misspelt>MedEdPublish</Misspelt>. 2019. <Misspelt>DOI</Misspelt>:{' '}
            <a href="https://doi.org/10.15694/mep.2019.000009.1" className="border-b border-[#0f2c52]">
              <Misspelt>https</Misspelt>://<Misspelt>doi.org</Misspelt>/10.15694/<Misspelt>mep</Misspelt>.2019.000009.1
            </a>.
          </p>
          <p>
            3. <Misspelt>Audétat</Misspelt> MC, <Misspelt>Laurin</Misspelt> S, <Misspelt>Sanche</Misspelt> G, et al. Clinical reasoning difficulties: A taxonomy for clinical teachers. Med Teach. 2013;35(3):e984-e989.
          </p>
          <p>
            <b>Author contact:</b> asp5c@virginia.edu <b>Twitter:</b> <Misspelt>@andrewparsonsMDw</Misspelt>
          </p>
        </div>
      </div>
    </article>
  );
}

function Editor() {
  return (
    <main className="relative flex min-w-0 flex-1 flex-col pl-[7px]">
      <SplitHandle dir="left" />
      <InfoBar text="Help us make LibreOffice even better!" action="Get involved" />
      <InfoBar text="Your donations support our worldwide community." action="Donate" />
      <div className="flex min-h-0 flex-1 pt-[11px]">
        <div className="flex flex-1 pr-12 pl-[41px]">
          <SlideCanvas />
        </div>
        <div className="w-[9px] pt-[187px]">
          <div className="h-[406px] w-[6px] rounded-full bg-[#888]" />
        </div>
      </div>
      <div className="h-6 shrink-0 pt-[15px]">
        <div className="ml-[32%] h-[6px] w-[400px] rounded-full bg-[#888]" />
      </div>
    </main>
  );
}

function SectionHeader({ title, gear }) {
  return (
    <div className="flex h-[18px] items-center bg-[#ebebeb] pr-[3px]">
      <ChevronDown size={16} strokeWidth={1.5} />
      <h3 className="flex-1 leading-[18px] font-bold">{title}</h3>
      {gear && (
        <button type="button" aria-label="More Options">
          <Settings size={12} strokeWidth={2} color="#777" />
        </button>
      )}
    </div>
  );
}

function SelectRow({ label, id, value, options, pressed, children }) {
  return (
    <div className="flex items-center">
      <label htmlFor={id} className="w-[167px] shrink-0 text-right">{label}</label>
      <div className="relative ml-[6px] w-[194px]">
        <select
          id={id}
          defaultValue={value}
          className={`h-[34px] w-full appearance-none rounded-md border border-[#c6c6c6] pl-[11px] ${pressed ? 'bg-[#d5d5d5]' : 'bg-white'}`}
        >
          {options.map((option) => (
            <option key={option}>{option}</option>
          ))}
        </select>
        <ChevronDown size={18} strokeWidth={1.5} className="pointer-events-none absolute top-2 right-[9px]" />
        {children}
      </div>
    </div>
  );
}

function CheckRow({ label, id }) {
  const [checked, setChecked] = useState(true);
  return (
    <div className="ml-[177px] flex h-6 items-center gap-1">
      <span className="relative flex h-4 w-4">
        <input
          id={id}
          type="checkbox"
          checked={checked}
          onChange={() => setChecked(!checked)}
          className="h-4 w-4 appearance-none rounded-[3px] border border-[#c6c6c6] bg-white checked:border-[#e95420] checked:bg-[#e95420]"
        />
        {checked && (
          <svg viewBox="0 0 16 16" className="pointer-events-none absolute inset-0" fill="none" aria-hidden="true">
            <path d="M3.500 8l3 3 6-6.500" stroke="#fff" strokeWidth="1.800" />
          </svg>
        )}
      </span>
      <label htmlFor={id}>{label}</label>
    </div>
  );
}

/* Each layout preview: purple title bars and gray content boxes as [x, y, w, h] */
const layouts = [
  { name: 'Blank Slide', purple: [], gray: [] },
  { name: 'Title Slide', purple: [[6, 7, 52, 8], [10, 24, 44, 5]], gray: [[6, 20, 52, 24]] },
  { name: 'Title, Content', purple: [[6, 7, 52, 8]], gray: [[6, 20, 52, 24]], selected: true },
  { name: 'Title and 2 Content', purple: [[6, 7, 52, 8]], gray: [[6, 20, 24, 24], [34, 20, 24, 24]] },
  { name: 'Title Only', purple: [[6, 7, 52, 8]], gray: [] },
  { name: 'Centered Text', purple: [[10, 19, 44, 5], [14, 28, 36, 5]], gray: [[6, 7, 52, 37]] },
  { name: 'Title, 2 Content and Content', purple: [[6, 7, 52, 8]], gray: [[6, 20, 24, 10], [6, 34, 24, 10], [34, 20, 24, 24]] },
  { name: 'Title, Content and 2 Content', purple: [[6, 7, 52, 8]], gray: [[6, 20, 24, 24], [34, 20, 24, 10], [34, 34, 24, 10]] },
  { name: 'Title, Content over 2 Content', purple: [[6, 7, 52, 8]], gray: [[6, 20, 52, 10], [6, 34, 24, 10], [34, 34, 24, 10]] },
  { name: 'Title, Content over Content', purple: [[6, 7, 52, 8]], gray: [[6, 20, 52, 10], [6, 34, 52, 10]] },
  { name: 'Title, 4 Content', purple: [[6, 7, 52, 8]], gray: [[6, 20, 24, 10], [34, 20, 24, 10], [6, 34, 24, 10], [34, 34, 24, 10]] },
  {
    name: 'Title, 6 Content',
    purple: [[6, 7, 52, 8]],
    gray: [[6, 20, 14, 10], [25, 20, 14, 10], [44, 20, 14, 10], [6, 34, 14, 10], [25, 34, 14, 10], [44, 34, 14, 10]]
  }
];

function LayoutButton({ layout }) {
  return (
    <button
      type="button"
      aria-label={layout.name}
      className={`flex h-[66px] items-center justify-center border ${layout.selected ? 'border-[#e95420]' : 'border-transparent'}`}
    >
      <svg width="64" height="52" viewBox="0 0 64 52" aria-hidden="true">
        <rect x="1" y="1" width="62" height="50" rx="8" fill="#e6e6e6" stroke="#8a8a8a" />
        {layout.gray.map(([x, y, w, h]) => (
          <rect key={`${x}-${y}`} x={x} y={y} width={w} height={h} rx="3" fill="#808080" />
        ))}
        {layout.purple.map(([x, y, w, h]) => (
          <rect key={`${x}-${y}`} x={x} y={y} width={w} height={h} rx="3" fill="#8e59d9" />
        ))}
      </svg>
    </button>
  );
}

const sideTabs = [
  { id: 'properties', label: 'Properties', active: true },
  { id: 'styles', label: 'Styles' },
  { id: 'gallery', label: 'Gallery' },
  { id: 'navigator', label: 'Navigator' },
  { id: 'diamond', label: 'Shapes' },
  { id: 'transition', label: 'Slide Transition' },
  { id: 'film', label: 'Animation' },
  { id: 'penBoard', label: 'Master Slides' }
];

function Sidebar() {
  const button = 'ml-[173px] h-[34px] w-[194px] rounded-md border border-[#c6c6c6] bg-white';
  return (
    <aside className="relative flex w-[511px] shrink-0 border-l border-[#b5b5b5] pl-2">
      <SplitHandle dir="right" />
      <div className="flex-1">
        <div className="flex h-[26px] items-center pt-px pr-[3px] pl-[1px]">
          <svg width="9" height="14" viewBox="0 0 9 14" fill="#777" aria-hidden="true">
            <path d="M0 0h3v3H0zM6 0h3v3H6zM0 5h3v3H0zM6 5h3v3H6zM0 10h3v3H0zM6 10h3v3H6z" />
          </svg>
          <h2 className="ml-[6px] flex-1 font-bold">Properties</h2>
          <button type="button" aria-label="Close Sidebar Deck">
            <X size={16} strokeWidth={2} />
          </button>
        </div>
        <SectionHeader title="Slide" gear />

        <div className="mt-[6px] mb-[6px] flex flex-col gap-[3px]">
          <SelectRow label="Format:" id="format" value="User" options={['User', 'A4', 'Letter']} />
          <SelectRow label="Orientation:" id="orientation" value="Landscape" options={['Landscape', 'Portrait']} pressed>
            <ul
              role="listbox"
              aria-label="Orientation"
              className="absolute top-[34px] left-0 z-20 h-[74px] w-full border border-[#bdbdbd] bg-white leading-[23px] text-[#111] shadow-[0_1px_2px_#999]"
            >
              <li role="option" aria-selected="true" className="bg-[#e95420] px-1 text-white">Landscape</li>
              <li role="option" aria-selected="false" className="px-1">Portrait</li>
            </ul>
            <svg width="18" height="26" viewBox="0 0 18 26" className="absolute top-[17px] left-[96px] z-30" aria-hidden="true">
              <path d={cursorPath} fill="#222" stroke="#fff" strokeWidth="1.500" />
            </svg>
          </SelectRow>
          <SelectRow label="Background:" id="background" value="None" options={['None', 'Color']} />
          <div className="h-[34px]" />
          <button type="button" className={button}>Insert Image...</button>
          <SelectRow label="Master Slide:" id="master" value="Title Slide" options={['Title Slide']} />
          <div>
            <CheckRow label="Master Background" id="master-bg" />
            <CheckRow label="Master Objects" id="master-obj" />
          </div>
          <button type="button" className={button}>Master View</button>
        </div>

        <SectionHeader title="Layouts" />
        <div className="grid grid-cols-4">
          {layouts.map((layout) => (
            <LayoutButton key={layout.name} layout={layout} />
          ))}
        </div>
      </div>

      <nav className="flex w-[50px] shrink-0 flex-col gap-2 pt-[5px] pl-1">
        {[{ id: 'menu', label: 'Sidebar Settings' }, ...sideTabs].map((tab) => (
          <button
            key={tab.label}
            type="button"
            aria-label={tab.label}
            className={`flex h-[34px] w-9 items-center justify-center rounded-md ${tab.active ? 'border border-[#c6c6c6] bg-[#d5d5d5]' : ''}`}
          >
            <Icon size={22}>{icons[tab.id]}</Icon>
          </button>
        ))}
      </nav>
    </aside>
  );
}

function StatusBar() {
  const line = 'h-4 w-px shrink-0 bg-[#d6d6d6]';
  return (
    <footer className="flex h-[21px] shrink-0 items-center border-t border-[#b5b5b5] text-[13px] leading-5 whitespace-nowrap">
      <span className="w-[75px] shrink-0 pl-[10px]">Slide 1 of 1</span>
      <span className={line} />
      <span className="flex-1" />
      <span className={line} />
      <span className="w-[381px] shrink-0 pl-2">Title Slide</span>
      <span className={line} />
      <span className="flex w-[215px] shrink-0 items-center pl-[10px]">
        <svg width="17" height="14" viewBox="0 0 17 14" fill="none" stroke={INK} aria-hidden="true">
          <path d="M7 3.500h9v8H3.500V8" />
          <path d="M3 0v7M0 3.500h6" stroke="#e95420" />
        </svg>
        <span className="ml-[3px] w-[83px]">-1.12 / -0.32</span>
        <svg width="17" height="14" viewBox="0 0 17 14" fill="none" stroke={INK} aria-hidden="true">
          <rect x="3.500" y="4.500" width="12" height="7" />
          <path d="M4 1.500h11M4.500 0v3M15 0v3M1.500 5v7M0 5h3M0 12h3" stroke="#e95420" />
        </svg>
        <span className="ml-1">0.00 x 0.00</span>
      </span>
      <span className={line} />
      <span className="flex w-[21px] shrink-0 justify-center">
        <Icon size={14}><path d="M9 2h6v8h5l-8 9-8-9h5z" fill="#8dcc3a" strokeWidth="2" /><path d="M4 22h16" strokeWidth="2.500" /></Icon>
      </span>
      <span className={line} />
      <span className="w-7 shrink-0" />
      <span className={line} />
      <span className="w-[399px] shrink-0 text-center">English (USA)</span>
      <span className={line} />
      <span className="flex w-[21px] shrink-0 justify-center">
        <Icon size={16} stroke="#e95420"><path d="M12 2v20M2 12h20" strokeWidth="2" /><path d="M12 0l4 6H8zM12 24l4-6H8zM0 12l6-4v8zM24 12l-6-4v8z" fill="#e95420" stroke="none" /></Icon>
      </span>
      <span className={line} />
      <div className="flex w-[142px] shrink-0 items-center justify-between px-[10px]">
        <button type="button" aria-label="Zoom Out" className="h-[2px] w-2 bg-[#555]" />
        <input
          type="range"
          aria-label="Zoom"
          min="0"
          max="100"
          defaultValue="48"
          className="h-[2px] w-[97px] appearance-none bg-[#999] [&::-webkit-slider-thumb]:h-[9px] [&::-webkit-slider-thumb]:w-[9px] [&::-webkit-slider-thumb]:appearance-none [&::-webkit-slider-thumb]:rounded-full [&::-webkit-slider-thumb]:border [&::-webkit-slider-thumb]:border-[#444] [&::-webkit-slider-thumb]:bg-white"
        />
        <button type="button" aria-label="Zoom In">
          <Icon size={8} box={8} stroke="#555"><path d="M0 4h8M4 0v8" strokeWidth="2" /></Icon>
        </button>
      </div>
      <span className={line} />
      <span className="w-12 shrink-0 pl-[11px]">99%</span>
    </footer>
  );
}

export default function App() {
  return (
    <div className="flex h-screen flex-col overflow-hidden bg-[#fafafa] font-['Noto_Sans','Open_Sans',sans-serif] text-sm text-[#3d3d3d]">
      <TopBar />
      <div className="flex min-h-0 flex-1">
        <Dock />
        <div className="flex min-w-0 flex-1 flex-col">
          <TitleBar />
          <MenuBar />
          <div className="flex shrink-0 flex-col gap-[5px] pt-[2px] pb-[3px] pl-[3px]">
            {toolbarRows.map((row, i) => (
              <div key={i} role="toolbar" aria-label={i === 0 ? 'Standard' : 'Drawing'} className="flex h-[34px]">
                {row.map((item, j) => (
                  <ToolItem key={j} item={item} />
                ))}
              </div>
            ))}
          </div>
          <div className="flex min-h-0 flex-1">
            <SlidesPanel />
            <Editor />
            <Sidebar />
          </div>
          <StatusBar />
        </div>
      </div>
    </div>
  );
}
